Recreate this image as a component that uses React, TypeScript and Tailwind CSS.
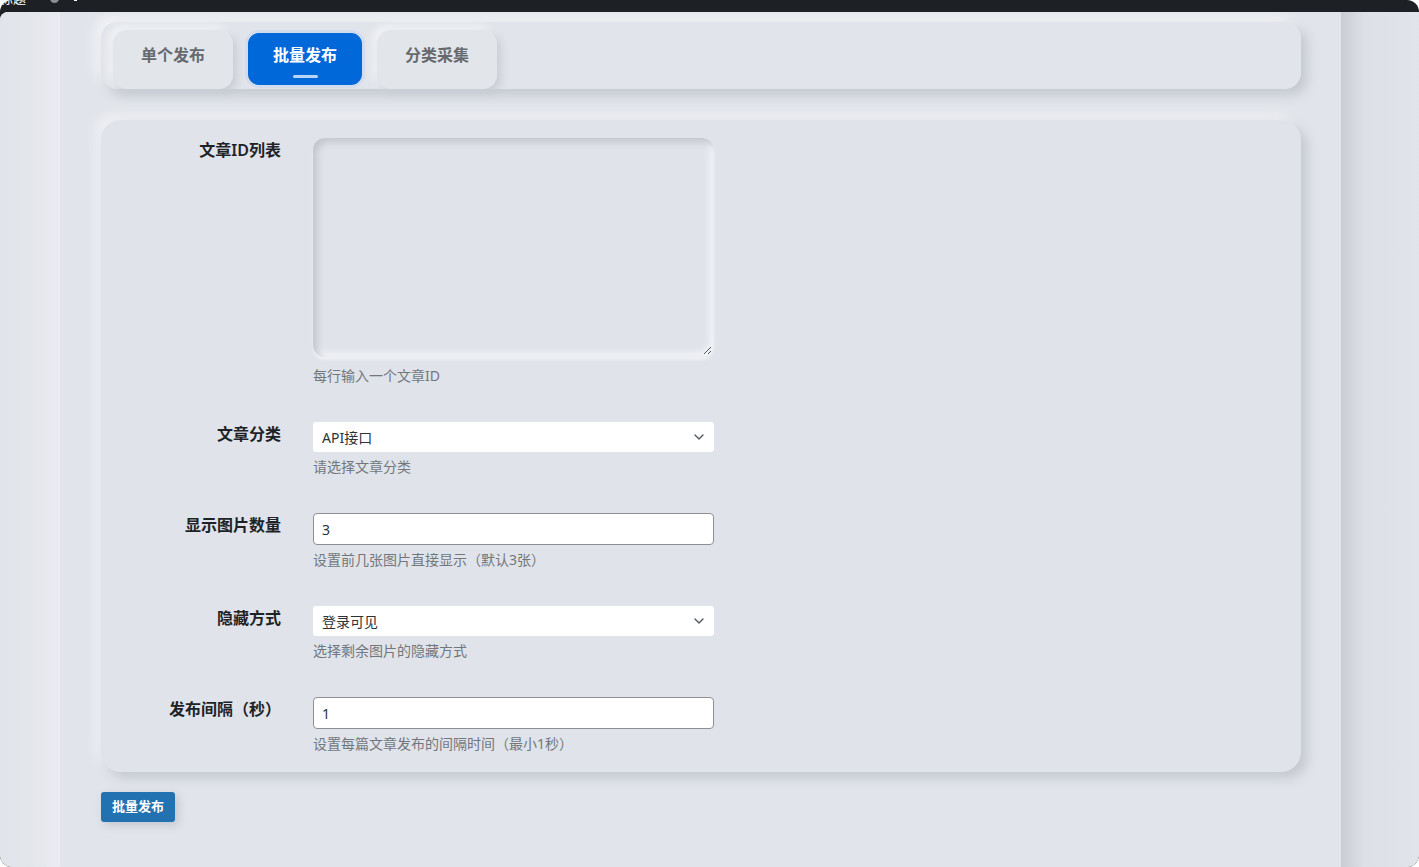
import { ChevronDown } from 'lucide-react';

const font = { fontFamily: '"Noto Sans", "Noto Sans CJK SC", sans-serif' };

const tabs = [
  { label: '单个发布', active: false },
  { label: '批量发布', active: true },
  { label: '分类采集', active: false },
];

function Row({ label, help, helpGap = 'mt-[5px]', children }: { label: string; help: string; helpGap?: string; children: React.ReactNode }) {
  return (
    <div className="flex gap-8">
      <div className="w-[180px] shrink-0 text-right text-[16px] leading-6 font-semibold text-[#1d2327]">{label}</div>
      <div className="w-[401px]">
        {children}
        <p className={`${helpGap} text-[14px] leading-5 text-[#72777c]`}>{help}</p>
      </div>
    </div>
  );
}

function SelectBox({ value }: { value: string }) {
  return (
    <div className="h-[30px] bg-white rounded-[3px] flex items-center justify-between pl-[9px] pr-[7px] text-[14px] text-[#2c3338]">
      <span>{value}</span>
      <ChevronDown size={16} strokeWidth={2} className="text-[#50575e]" />
    </div>
  );
}

function TextInput({ value }: { value: string }) {
  return (
    <div className="h-8 bg-white border border-[#8c8f94] rounded-[4px] flex items-center px-2 text-[14px] text-[#2c3338]">
      {value}
    </div>
  );
}

export default function App() {
  return (
    <div className="h-screen bg-white" style={font}>
      <div className="h-[867px] rounded-xl overflow-hidden bg-[#1d2125] flex flex-col">
        {/* title bar, mostly scrolled off */}
        <div className="h-3 shrink-0 relative overflow-hidden">
          <span className="absolute left-0 top-[-11px] text-[13px] text-white">标题</span>
          <span className="absolute left-[50px] top-[-6px] w-[9px] h-[9px] rounded-full bg-[#8a8f95]" />
          <span className="absolute left-[74px] top-[-6px] w-[3px] h-[7px] bg-white" />
        </div>

        <div className="flex-1 flex rounded-tl-lg rounded-b-xl overflow-hidden bg-[#e1e4ea]">
          <div className="w-[60px] shrink-0 bg-gradient-to-r from-[#e1e4ea] via-[#e3e6eb] to-[#eaecf1]" />

          <div className="flex-1 pt-[10px] pl-[41px] pr-10">
            {/* tabs */}
            <div className="h-[67px] rounded-2xl bg-[#e1e4ea] shadow-[6px_6px_12px_#c4c8cf,-6px_-6px_12px_#f1f3f6] pt-2 px-3 flex gap-3">
              {tabs.map((t) =>
                t.active ? (
                  <div
                    key={t.label}
                    className="w-[120px] h-[58px] rounded-[14px] border-[3px] border-[#d2dcec] bg-[#0068d9] flex flex-col items-center pt-[10px]"
                  >
                    <span className="text-[16px] leading-6 font-bold text-white">{t.label}</span>
                    <span className="mt-[8px] w-[25px] h-[3px] rounded-full bg-[#b8d6f7]" />
                  </div>
                ) : (
                  <div
                    key={t.label}
                    className="w-[120px] h-[59px] rounded-[14px] bg-[#e2e5ea] shadow-[4px_4px_8px_#c8ccd3,-4px_-4px_8px_#f3f5f8] flex flex-col items-center pt-[13px]"
                  >
                    <span className="text-[16px] leading-6 font-semibold text-[#66696e]">{t.label}</span>
                  </div>
                )
              )}
            </div>

            {/* form */}
            <div className="mt-[31px] rounded-[20px] bg-[#e0e3e9] shadow-[6px_6px_12px_#c4c8cf,-6px_-6px_12px_#eef0f4] pt-[18px] pb-[18px] flex flex-col gap-9">
              <Row label="文章ID列表" help="每行输入一个文章ID" helpGap="mt-[9px]">
                <div className="relative h-[219px] rounded-xl bg-[#e0e3e9] shadow-[inset_4px_4px_7px_#c2c6cd,inset_-4px_-4px_7px_#f4f6f9,0_3px_3px_#edf0f4]">
                  <svg className="absolute right-[2px] bottom-[2px]" width="9" height="9" viewBox="0 0 9 9">
                    <path d="M8 1 L1 8 M8 5 L5 8" stroke="#555" strokeWidth="1" />
                  </svg>
                </div>
              </Row>
              <Row label="文章分类" help="请选择文章分类">
                <SelectBox value="API接口" />
              </Row>
              <Row label="显示图片数量" help="设置前几张图片直接显示（默认3张）">
                <TextInput value="3" />
              </Row>
              <Row label="隐藏方式" help="选择剩余图片的隐藏方式">
                <SelectBox value="登录可见" />
              </Row>
              <Row label="发布间隔（秒）" help="设置每篇文章发布的间隔时间（最小1秒）">
                <TextInput value="1" />
              </Row>
            </div>

            <button className="mt-5 h-[30px] w-[74px] rounded-[3px] bg-[#2271b1] text-white text-[13px] font-bold shadow-[3px_3px_8px_#c2c6cd]">
              批量发布
            </button>
          </div>

          <div className="w-[78px] shrink-0 bg-gradient-to-r from-[#c9cdd4] via-[#dde0e6] via-30% to-[#e1e4ea]" />
        </div>
      </div>
    </div>
  );
}
